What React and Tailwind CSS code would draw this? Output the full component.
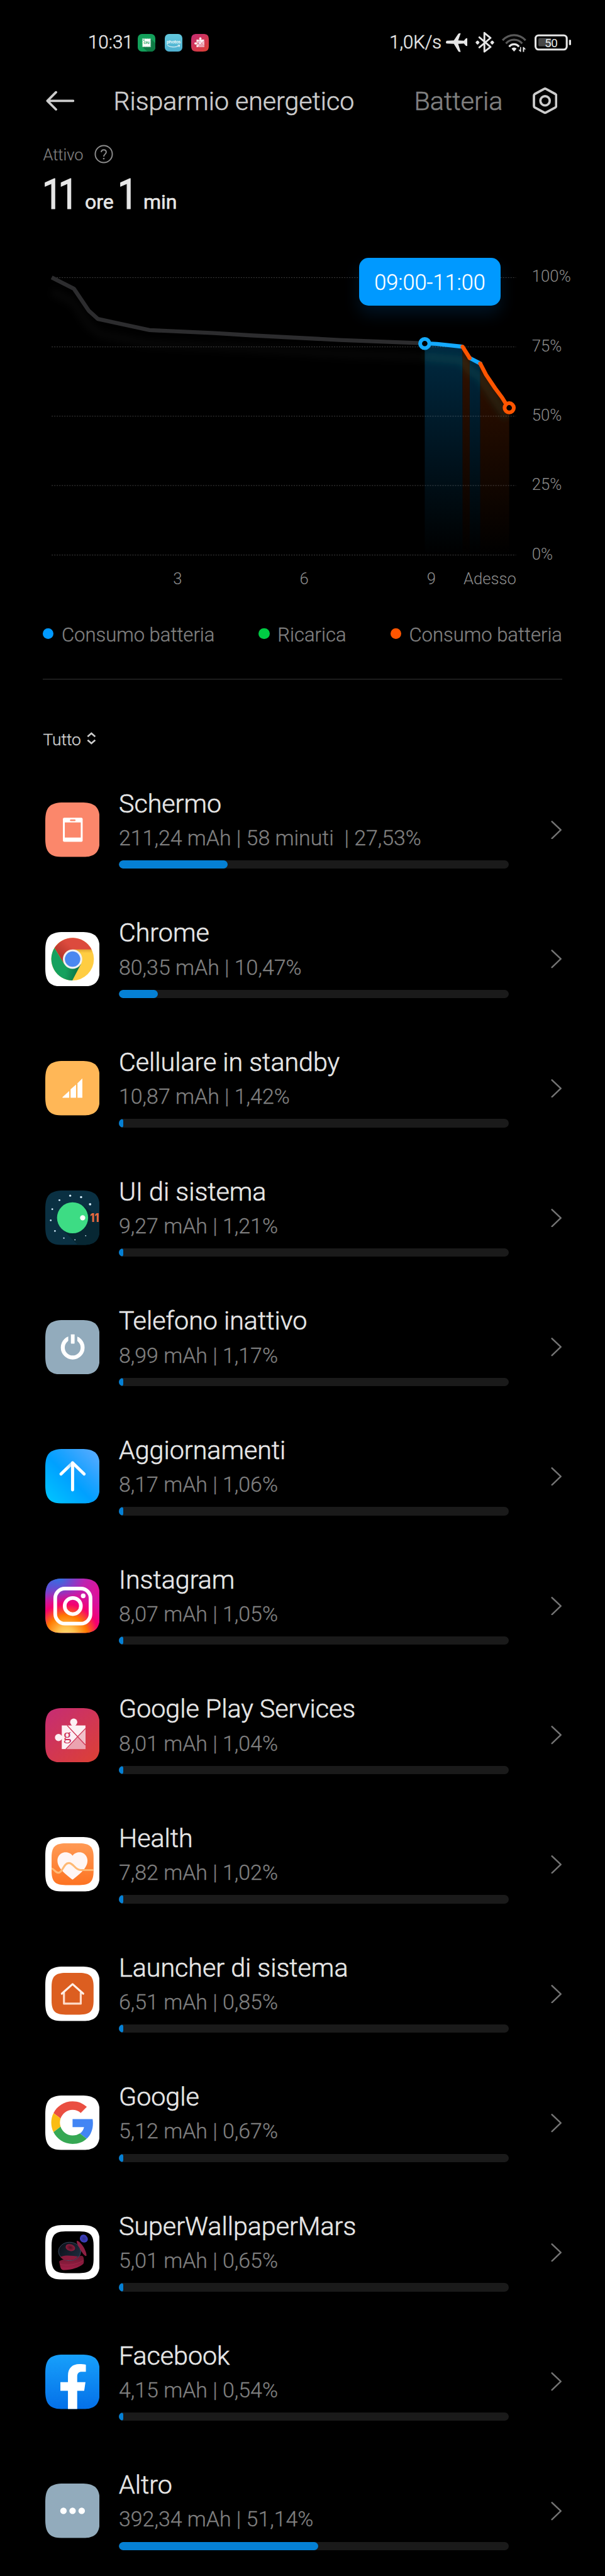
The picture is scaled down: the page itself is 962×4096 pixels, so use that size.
import React from "react";

const SQUIRCLE =
  "M0 44C0 11 11 0 44 0H86C119 0 130 11 130 44V86C130 119 119 130 86 130H44C11 130 0 119 0 86Z";
const INNER =
  "M15 48.500C15 23.500 23.500 15 48.500 15H81.500C106.500 15 115 23.500 115 48.500V81C115 106 106.500 114.500 81.500 114.500H48.500C23.500 114.500 15 106 15 81Z";

function Tile({ fill, children, id }) {
  return (
    <svg viewBox="0 0 130 130" className="block h-[86.8px] w-[86.8px] shrink-0">
      <defs>
        <clipPath id={`${id}-clip`}>
          <path d={SQUIRCLE} />
        </clipPath>
      </defs>
      <g clipPath={`url(#${id}-clip)`}>
        <rect width="130" height="130" fill={fill} />
        {children}
      </g>
    </svg>
  );
}

function ScreenIcon() {
  return (
    <Tile id="screen" fill="#fb876b">
      <rect x="42" y="36.200" width="47" height="57.300" rx="3" fill="#fff" />
      <rect x="46.500" y="47.500" width="38" height="36" fill="#fb876b" />
      <rect x="59" y="40.300" width="13" height="3.800" rx="1.900" fill="#fb876b" />
    </Tile>
  );
}

function ChromeIcon() {
  return (
    <Tile id="chrome" fill="#fff">
      <defs>
        <linearGradient id="chr-y" x1="0" y1="0" x2="0" y2="1">
          <stop offset="0" stopColor="#e2a62f" />
          <stop offset="1" stopColor="#ffcd42" />
        </linearGradient>
        <linearGradient id="chr-g" x1="0" y1="0.500" x2="1" y2="0.700">
          <stop offset="0.500" stopColor="#15a15e" />
          <stop offset="1" stopColor="#0b6b42" />
        </linearGradient>
        <linearGradient id="chr-r" x1="0.100" y1="0.700" x2="0.500" y2="0.400">
          <stop offset="0" stopColor="#b23529" />
          <stop offset="1" stopColor="#dc4a3d" />
        </linearGradient>
      </defs>
      <circle cx="65" cy="64.500" r="50.800" fill="#ffcd42" />
      <path d="M65 41.500H110L112 50L82 49Z" fill="url(#chr-y)" />
      <path d="M110.300 41.500A50.800 50.800 0 0 0 21.800 38L45 76L65 41.500Z" fill="url(#chr-r)" />
      <path d="M21.800 38A50.800 50.800 0 0 0 64.500 115.300L85 76L65 86L45 76Z" fill="url(#chr-g)" />
      <circle cx="65" cy="64.500" r="23" fill="#f1f1f1" />
      <circle cx="65" cy="64.500" r="18.400" fill="#4a88f0" />
    </Tile>
  );
}

function StandbyIcon() {
  return (
    <Tile id="standby" fill="#ffb757">
      <g fill="#fff">
        <path d="M41 87.700V86L57 71.500V87.700Z" />
        <path d="M60.300 87.700V67.500L73.300 56V87.700Z" />
        <path d="M76.700 87.700V53L88.300 41.500V87.700Z" />
      </g>
    </Tile>
  );
}

const STARS = [
  [59.3, 12.2, 2.5], [85.3, 15.8, 2.6], [106.7, 32.6, 2.8], [33.7, 23, 2.2], [16.7, 44.4, 2.1],
  [13, 71, 2], [23, 96.4, 1.9], [44.3, 113.3, 1.6], [70.7, 117.3, 1.4], [96.3, 107.6, 1.3],
];

function SystemUiIcon() {
  return (
    <Tile id="sysui" fill="#0a3042">
      <path d="M92 38L130 66V130H78L44 96Z" fill="#072733" />
      <circle cx="65" cy="65" r="37" fill="#3ddc84" />
      <circle cx="89" cy="65" r="6.200" fill="#fff" />
      {STARS.map(([x, y, r]) => (
        <circle key={x} cx={x} cy={y} r={r} fill="#d6efff" />
      ))}
      <text x="106.500" y="75" fontSize="27" fontWeight="800" fontFamily="Inter, sans-serif" fill="#e96b40" textLength="21.500" lengthAdjust="spacingAndGlyphs">
        11
      </text>
    </Tile>
  );
}

function PowerIcon() {
  return (
    <Tile id="power" fill="#92abbc">
      <circle cx="65.300" cy="65.500" r="23.600" fill="none" stroke="#fff" strokeWidth="9.400" />
      <rect x="54.700" y="32" width="21.600" height="24" fill="#92abbc" />
      <rect x="61" y="34" width="8.800" height="22.200" rx="1" fill="#fff" />
    </Tile>
  );
}

function UpdateIcon() {
  return (
    <Tile id="update" fill="url(#upd-bg)">
      <defs>
        <linearGradient id="upd-bg" x1="0.050" y1="0.950" x2="0.950" y2="0.050">
          <stop offset="0" stopColor="#00c3ff" />
          <stop offset="0.450" stopColor="#00a0ff" />
          <stop offset="0.650" stopColor="#1ea2ff" />
          <stop offset="1" stopColor="#57abff" />
        </linearGradient>
        <linearGradient id="upd-arm" x1="37" y1="60" x2="65" y2="33" gradientUnits="userSpaceOnUse">
          <stop offset="0.450" stopColor="#fff" />
          <stop offset="0.900" stopColor="#a9dcff" />
        </linearGradient>
      </defs>
      <g fill="none" strokeWidth="7.400" strokeLinecap="round" strokeLinejoin="round">
        <path d="M37.500 59.500L65 33" stroke="url(#upd-arm)" />
        <path d="M65 97.500V33L92.500 59.500" stroke="#fff" />
      </g>
    </Tile>
  );
}

function InstagramIcon() {
  return (
    <Tile id="insta" fill="url(#ig-a)">
      <defs>
        <linearGradient id="ig-a" x1="0" y1="0" x2="1" y2="0.700">
          <stop offset="0" stopColor="#4a5be0" />
          <stop offset="0.350" stopColor="#a52fbe" />
          <stop offset="0.700" stopColor="#d9169f" />
          <stop offset="1" stopColor="#e6008a" />
        </linearGradient>
        <radialGradient id="ig-b" cx="50" cy="138" r="125" gradientUnits="userSpaceOnUse">
          <stop offset="0" stopColor="#ffe07c" />
          <stop offset="0.180" stopColor="#ffc24e" />
          <stop offset="0.400" stopColor="#ff7a00" />
          <stop offset="0.620" stopColor="#f5006e" />
          <stop offset="0.800" stopColor="#dd0f96" stopOpacity="0.700" />
          <stop offset="1" stopColor="#b02cc0" stopOpacity="0" />
        </radialGradient>
        <radialGradient id="ig-c" cx="32" cy="-4" r="62" gradientUnits="userSpaceOnUse">
          <stop offset="0" stopColor="#2a78e4" />
          <stop offset="1" stopColor="#6a3fd0" stopOpacity="0" />
        </radialGradient>
      </defs>
      <rect width="130" height="130" fill="url(#ig-b)" />
      <rect width="130" height="130" fill="url(#ig-c)" />
      <g fill="none" stroke="#fff" strokeWidth="8.700">
        <rect x="23.700" y="23.800" width="84" height="83.600" rx="23" />
        <circle cx="65.500" cy="65.400" r="19.300" />
      </g>
      <circle cx="90.300" cy="41.300" r="5.600" fill="#fff" />
    </Tile>
  );
}

function PuzzleArt() {
  return (
    <>
      <g fill="#fcf0f4">
        <rect x="39.300" y="41.300" width="56.400" height="56.200" />
        <circle cx="67.700" cy="33.200" r="8.500" />
        <circle cx="31.500" cy="70" r="8.500" />
        <rect x="63.500" y="38" width="8.500" height="6" />
        <rect x="36" y="66" width="6" height="8" />
      </g>
      <path d="M76.500 68.500L95.700 88V97.500H49Z" fill="#eba3b0" />
      <path d="M76.500 68.500L95.700 48.500V88Z" fill="#f1c0ca" />
      <path d="M52 41.300L95.700 88M95.700 48.500L49 97.500" stroke="#cf3556" strokeWidth="2" />
      <text x="52.500" y="76.500" textAnchor="middle" fontSize="38" fontFamily="Liberation Serif, serif" fill="#cc3058">
        g
      </text>
    </>
  );
}

function PlayServicesIcon({ id = "gps" }) {
  return (
    <Tile id={id} fill={`url(#${id}-bg)`}>
      <defs>
        <linearGradient id={`${id}-bg`} x1="0.100" y1="0" x2="0.900" y2="1">
          <stop offset="0" stopColor="#c62d72" />
          <stop offset="1" stopColor="#dc4036" />
        </linearGradient>
      </defs>
      <PuzzleArt />
    </Tile>
  );
}

function HealthIcon() {
  return (
    <Tile id="health" fill="#fff">
      <defs>
        <linearGradient id="hl-bg" x1="0" y1="0" x2="0" y2="1">
          <stop offset="0" stopColor="#ff9a55" />
          <stop offset="1" stopColor="#fd7322" />
        </linearGradient>
      </defs>
      <path d={INNER} fill="url(#hl-bg)" />
      <path
        d="M65 44.500C59 36 49 35.500 43 37C34 39.500 29 47 29 56C29 74 48 88 65 101.500C82 88 100.500 74 100.500 56C100.500 47 95 39.500 87 37C80 35.500 71 36 65 44.500Z"
        fill="#fff6f5"
      />
      <path
        d="M15 75C22 76 23 85 31 85C42 85 43 62 56 62C68 62 70 78.500 84 78.500H115"
        fill="none"
        stroke="#ffb974"
        strokeWidth="4.600"
      />
    </Tile>
  );
}

function LauncherIcon() {
  return (
    <Tile id="launcher" fill="#fff">
      <path d={INNER} fill="#dc5e20" />
      <g fill="none" strokeWidth="4.800" strokeLinecap="round" strokeLinejoin="round">
        <path d="M44.500 62V88.300H84.500V62" stroke="#ffdcca" />
        <path d="M39.500 64.500L65 41.700L90.300 64.500" stroke="#fff0e8" />
      </g>
    </Tile>
  );
}

function GoogleIcon() {
  return (
    <Tile id="google" fill="#fff">
      <g transform="translate(14.200 13.800) scale(2.115)">
        <path fill="#ea4f41" d="M24 9.500c3.540 0 6.710 1.220 9.210 3.600l6.850-6.850C35.900 2.380 30.470 0 24 0 14.620 0 6.510 5.380 2.560 13.220l7.980 6.190C12.430 13.720 17.740 9.500 24 9.500z" />
        <path fill="#4285f4" d="M46.980 24.550c0-1.570-.15-3.090-.38-4.550H24v9.020h12.940c-.58 2.960-2.260 5.480-4.780 7.180l7.730 6c4.510-4.180 7.090-10.360 7.090-17.650z" />
        <path fill="#fbbc14" d="M10.530 28.590c-.48-1.450-.76-2.990-.76-4.590s.27-3.140.76-4.590l-7.980-6.190C.92 16.460 0 20.120 0 24c0 3.880.92 7.540 2.560 10.780l7.970-6.190z" />
        <path fill="#36a854" d="M24 48c6.480 0 11.930-2.130 15.890-5.810l-7.730-6c-2.150 1.450-4.920 2.300-8.160 2.300-6.260 0-11.570-4.220-13.470-9.910l-7.980 6.190C6.510 42.620 14.620 48 24 48z" />
      </g>
    </Tile>
  );
}

function MarsIcon() {
  return (
    <Tile id="mars" fill="#fff">
      <defs>
        <linearGradient id="ms-disc" x1="0" y1="0" x2="1" y2="0.600">
          <stop offset="0" stopColor="#0b0f17" />
          <stop offset="1" stopColor="#1d2a3b" />
        </linearGradient>
        <radialGradient id="ms-moon">
          <stop offset="0" stopColor="#2a2f88" />
          <stop offset="1" stopColor="#3f40c4" />
        </radialGradient>
        <radialGradient id="ms-spot">
          <stop offset="0" stopColor="#4a0f22" />
          <stop offset="1" stopColor="#8f1f3f" />
        </radialGradient>
        <linearGradient id="ms-slab" x1="0" y1="0" x2="0" y2="1">
          <stop offset="0" stopColor="#6b1730" />
          <stop offset="1" stopColor="#a31f48" />
        </linearGradient>
      </defs>
      <path d={INNER} fill="#000" />
      <path d="M33 87C40 80 52 82 66 79C78 76 88 68 91 77C92 82 93 90 90 93C80 102 58 108 43 107C35 106 36 98 33 87Z" fill="url(#ms-slab)" />
      <path d="M35 93C52 98 76 94 91 84" fill="none" stroke="#c23a5e" strokeWidth="1" opacity="0.600" />
      <ellipse cx="58" cy="62.800" rx="26.600" ry="22" fill="url(#ms-disc)" stroke="#46566e" strokeWidth="1.200" />
      <path d="M36 76C48 70 68 74 78 75C72 83 63 84.500 56 84C47 84 40 81 36 76Z" fill="#8a1b3c" />
      <ellipse cx="59.700" cy="53.600" rx="11.500" ry="8" transform="rotate(18 59.700 53.600)" fill="url(#ms-spot)" />
      <path d="M75 37.500C80 37 87 46 91 52C95 59 99 68 98 73.500C94 75 88 66 84 59C80 52 74 43 75 37.500Z" fill="#8e1f42" />
      <path d="M83 29C85 22 92 21.500 97 25C102 30 103 36 98 40C93 43 87 41 84 37C82 34 82 32 83 29Z" fill="url(#ms-moon)" />
    </Tile>
  );
}

function FacebookIcon() {
  return (
    <Tile id="fb" fill="url(#fb-bg)">
      <defs>
        <linearGradient id="fb-bg" x1="0" y1="0" x2="0" y2="1">
          <stop offset="0" stopColor="#17a0fb" />
          <stop offset="1" stopColor="#0470e8" />
        </linearGradient>
      </defs>
      <path
        d="M54 130V86.200H36V65.400H54V50C54 32 65 22.600 81 22.600C87 22.600 93 23 96.700 24V41H87C79.500 41 76 45 76 52V65.400H95.700L92.700 86.200H76V130Z"
        fill="#fff"
      />
    </Tile>
  );
}

function OtherIcon() {
  return (
    <Tile id="other" fill="#92abbc">
      <g fill="#fff">
        <circle cx="43.300" cy="65" r="7.700" />
        <circle cx="65" cy="65" r="7.700" />
        <circle cx="86.700" cy="65" r="7.700" />
      </g>
    </Tile>
  );
}

const APPS = [
  { name: "Schermo", detail: "211,24 mAh | 58 minuti\u00a0 | 27,53%", pct: 27.9, Icon: ScreenIcon },
  { name: "Chrome", detail: "80,35 mAh | 10,47%", pct: 10.05, Icon: ChromeIcon },
  { name: "Cellulare in standby", detail: "10,87 mAh | 1,42%", pct: 1.1, Icon: StandbyIcon },
  { name: "UI di sistema", detail: "9,27 mAh | 1,21%", pct: 1.1, Icon: SystemUiIcon },
  { name: "Telefono inattivo", detail: "8,99 mAh | 1,17%", pct: 1.1, Icon: PowerIcon },
  { name: "Aggiornamenti", detail: "8,17 mAh | 1,06%", pct: 1.1, Icon: UpdateIcon },
  { name: "Instagram", detail: "8,07 mAh | 1,05%", pct: 1.1, Icon: InstagramIcon },
  { name: "Google Play Services", detail: "8,01 mAh | 1,04%", pct: 1.1, Icon: PlayServicesIcon },
  { name: "Health", detail: "7,82 mAh | 1,02%", pct: 1.1, Icon: HealthIcon },
  { name: "Launcher di sistema", detail: "6,51 mAh | 0,85%", pct: 1.1, Icon: LauncherIcon },
  { name: "Google", detail: "5,12 mAh | 0,67%", pct: 1.1, Icon: GoogleIcon },
  { name: "SuperWallpaperMars", detail: "5,01 mAh | 0,65%", pct: 1.1, Icon: MarsIcon },
  { name: "Facebook", detail: "4,15 mAh | 0,54%", pct: 1.1, Icon: FacebookIcon },
  { name: "Altro", detail: "392,34 mAh | 51,14%", pct: 51.1, Icon: OtherIcon },
];

function StatusBar() {
  return (
    <div className="flex h-[136px] shrink-0 items-center pr-[54px] pl-[140px]">
      <span className="w-[79px] text-[29.500px] leading-none font-light text-[#e6e6e6] [-webkit-text-stroke:0.5px]">10:31</span>
      <div className="flex gap-[14.7px]">
        <svg viewBox="0 0 126 126" className="h-7 w-7">
          <defs>
            <clipPath id="cpu-clip">
              <rect width="126" height="126" rx="30" />
            </clipPath>
          </defs>
          <g clipPath="url(#cpu-clip)">
            <rect width="126" height="126" fill="#139f5a" />
            <path d="M93 33L126 66V126H70L33 93Z" fill="#0e7a45" />
            <rect x="35" y="35" width="56" height="56" fill="#fff" />
            <rect x="33" y="33" width="60" height="60" fill="none" stroke="#fff" strokeWidth="3" strokeDasharray="4 3" />
            <rect x="40" y="40" width="8" height="8" fill="#139f5a" />
            <text x="63" y="70" textAnchor="middle" fontSize="19" fontWeight="800" fontFamily="Inter, sans-serif" fill="#139f5a">
              CPU
            </text>
          </g>
        </svg>
        <svg viewBox="0 0 126 126" className="h-7 w-7">
          <defs>
            <linearGradient id="ph-bg" x1="0" y1="0" x2="0" y2="1">
              <stop offset="0" stopColor="#62c7dc" />
              <stop offset="1" stopColor="#4fb0d0" />
            </linearGradient>
          </defs>
          <rect width="126" height="126" rx="30" fill="url(#ph-bg)" />
          <text x="63" y="67" textAnchor="middle" fontSize="32" textLength="102" fontFamily="Open Sans, sans-serif" fontWeight="600" fill="#fff">
            photos
          </text>
          <path d="M19 81C42 97 76 98 102 84M92 81L107 80L102 94" fill="none" stroke="#fff" strokeWidth="4.500" />
        </svg>
        <div className="h-7 w-7 [&>svg]:h-7 [&>svg]:w-7">
          <PlayServicesIcon id="gps-mini" />
        </div>
      </div>
      <div className="ml-auto flex items-center">
        <span className="mr-[6.500px] text-[29.200px] leading-none font-light text-[#e6e6e6] [-webkit-text-stroke:0.5px]">1,0K/s</span>
        <svg viewBox="483 40 153 158" className="mr-[13.4px] h-[35.200px] w-[34px]" fill="#e6e6e6">
          <path d="M490 106Q483 109 483 117Q483 126 490 127L540 129L572 182Q574 186 580 186H589L571 129L612 127L624 141Q628 144 636 144V88Q628 87 624 92L612 106L571 104L589 53H580Q574 53 570 59L540 104Z" />
        </svg>
        <svg viewBox="696 40 135 158" className="mr-[12px] h-[35.200px] w-[30px]" fill="none" stroke="#e6e6e6" strokeWidth="13" strokeLinejoin="round" strokeLinecap="round">
          <path d="M724 82L804 151L760 184V50L804 86L724 154" />
          <path d="M711 112L704 119L711 126L718 119ZM816 112L809 119L816 126L823 119Z" fill="#e6e6e6" />
        </svg>
        <svg viewBox="884 40 175 158" className="mr-[12.7px] h-[35.200px] w-[39px]" fill="none" strokeWidth="15" strokeLinecap="butt">
          <path d="M889 103C935 54 1007 54 1053 103" stroke="#595959" />
          <path d="M913 126C944 90 998 90 1029 126" stroke="#595959" />
          <path d="M936 149C955 126 987 126 1006 149" stroke="#e6e6e6" />
          <path d="M953 164C962 152 980 152 989 164L971 184Z" fill="#e6e6e6" />
          <path d="M1021 151V186H1015L1003 170H1014V151ZM1034 186V151H1040L1056 168H1043V186Z" fill="#e6e6e6" />
        </svg>
        <svg viewBox="1116 40 262 158" className="h-[35.200px] w-[58.300px]">
          <rect x="1123" y="68" width="223" height="101" rx="22" fill="none" stroke="#e6e6e6" strokeWidth="14" />
          <rect x="1143" y="87" width="93" height="60" rx="10" fill="#474747" />
          <rect x="1362" y="99" width="15" height="39" rx="6" fill="#e6e6e6" />
          <text x="1234" y="152" textAnchor="middle" fontSize="85" fill="#e6e6e6" letterSpacing="-2">
            50
          </text>
        </svg>
      </div>
    </div>
  );
}

function Header() {
  return (
    <div className="flex h-[49px] shrink-0 items-center pl-[73px]">
      <svg viewBox="109 214 68 52" className="h-[34.700px] w-[45.400px]" fill="none" stroke="#cccccc" strokeWidth="5.600" strokeLinecap="round" strokeLinejoin="round">
        <path d="M174 240H112.500M133 219.500L112.500 240L133 260.500" />
      </svg>
      <h1 className="mt-[3px] ml-[62px] w-[478px] text-[41.100px] leading-none font-light whitespace-nowrap text-[#cccccc] [-webkit-text-stroke:0.600px]">Risparmio energetico</h1>
      <span className="mt-[3px] w-[186.600px] text-[41.400px] leading-none font-light text-[#808080] [-webkit-text-stroke:0.600px]">Batteria</span>
      <svg viewBox="1104 440 177 190" className="ml-[2px] h-[42.300px] w-[39.400px]" fill="none" stroke="#cccccc" strokeWidth="17" strokeLinejoin="round">
        <path d="M1186 451Q1192.500 447 1199 451L1266 487Q1272 491 1272 498V572Q1272 579 1266 583L1199 619Q1192.500 623 1186 619L1119 583Q1113 579 1113 572V498Q1113 491 1119 487Z" />
        <circle cx="1192.500" cy="535.500" r="33.500" />
      </svg>
    </div>
  );
}

const GRID = [
  ["100%", 660.5],
  ["75%", 825.5],
  ["50%", 990.5],
  ["25%", 1155.5],
  ["0%", 1321],
];

function Chart() {
  return (
    <div className="relative mt-[56.500px] h-[534.300px] shrink-0">
      <svg viewBox="0 600 1440 800" preserveAspectRatio="none" className="block h-full w-full">
        <defs>
          <linearGradient id="area-blue" x1="0" y1="817" x2="0" y2="1321" gradientUnits="userSpaceOnUse">
            <stop offset="0" stopColor="#002a42" />
            <stop offset="1" stopColor="#002a42" stopOpacity="0" />
          </linearGradient>
          <linearGradient id="area-orange" x1="0" y1="825" x2="0" y2="1321" gradientUnits="userSpaceOnUse">
            <stop offset="0" stopColor="#341200" />
            <stop offset="1" stopColor="#341200" stopOpacity="0" />
          </linearGradient>
          <filter id="soft" x="-10%" y="-30%" width="120%" height="160%">
            <feGaussianBlur stdDeviation="8" />
          </filter>
        </defs>
        <path d="M1011 817L1101 825V1321H1011Z" fill="url(#area-blue)" />
        <path d="M1101 825L1118 852V1321H1101Z" fill="url(#area-orange)" />
        <path d="M1118 852L1143 865V1321H1118Z" fill="url(#area-blue)" />
        <path d="M1143 865L1212 970V1321H1143Z" fill="url(#area-orange)" />
        <path
          d="M123 692L176 720L211 773L240 795L356 818L510 825L808 842L1011 849"
          fill="none"
          stroke="#ffffff"
          strokeOpacity="0.025"
          strokeWidth="22"
          filter="url(#soft)"
        />
        <path
          d="M1011 849L1099 857L1120 883L1143 897L1178 950L1206 992"
          fill="none"
          stroke="#30a878"
          strokeOpacity="0.130"
          strokeWidth="20"
          filter="url(#soft)"
        />
        {GRID.map(([label, y]) => (
          <g key={label}>
            <line x1="123" x2="1228" y1={y} y2={y} stroke="#ffffff" strokeOpacity="0.320" strokeWidth="1.200" strokeDasharray="3 3" />
            <text x="1266" y={y + 10.5} fontSize="38.600" fill="#8c8c8c" fontWeight="300">
              {label}
            </text>
          </g>
        ))}
        <g fontSize="38.400" fill="#8c8c8c" fontWeight="300" textAnchor="middle">
          <text x="422.500" y="1391">3</text>
          <text x="724" y="1391">6</text>
          <text x="1026.500" y="1391">9</text>
          <text x="1166" y="1391">Adesso</text>
        </g>
        <g fill="none" strokeWidth="9.500" strokeLinejoin="round">
          <path d="M123 660L176 687L211 739L233 759L356 785.500L510 792.500L597 798L808 809L1011 817" stroke="#2c2c2e" />
          <path d="M1011 817L1040 818.500L1101 825" stroke="#14aaff" />
          <path d="M1118 852L1143 865" stroke="#14aaff" strokeLinecap="round" />
          <path d="M1101 825L1118 852" stroke="#ff5500" strokeLinecap="round" />
          <path d="M1143 865L1157 892L1178.500 924L1195 946L1208 967" stroke="#ff5500" strokeLinecap="round" />
          <circle cx="1011" cy="817.500" r="11" fill="#000" stroke="#14aaff" strokeWidth="9" />
          <circle cx="1212" cy="970.500" r="11" fill="#000" stroke="#ff5500" strokeWidth="9" />
        </g>
      </svg>
      <div className="absolute top-[9.500px] left-[571px] flex h-[76px] w-[225px] items-center justify-center rounded-[15px] bg-[#0099ff] pt-[3px] text-[34.300px] leading-none font-light text-white shadow-[0_14px_26px_rgba(0,120,220,0.16)] [-webkit-text-stroke:0.3px]">
        09:00-11:00
      </div>
    </div>
  );
}

function Legend() {
  const items = [
    ["Consumo batteria", "bg-[#0099ff]"],
    ["Ricarica", "bg-[#00cc44]"],
    ["Consumo batteria", "bg-[#ff5500]"],
  ];
  return (
    <div className="mx-[68px] mt-[58px] flex h-[30px] shrink-0 items-center justify-between">
      {items.map(([label, dot], i) => (
        <div key={i} className="flex items-center gap-[12.500px]">
          <span className={`h-[17.400px] w-[17.400px] rounded-full ${dot}`} />
          <span className="mt-[3px] text-[31px] leading-none font-light whitespace-nowrap text-[#808080] [-webkit-text-stroke:0.3px]">{label}</span>
        </div>
      ))}
    </div>
  );
}

function AppRow({ name, detail, pct, Icon }) {
  return (
    <li className="flex h-[205.670px] shrink-0 items-center pr-[68.500px] pl-[71.500px]">
      <Icon />
      <div className="mb-[3.600px] ml-[30.700px] w-[620px]">
        <div className="text-[41.200px] leading-[48px] font-light whitespace-nowrap text-[#e6e6e6] [-webkit-text-stroke:0.600px]">{name}</div>
        <div className="mt-[11.300px] text-[33.900px] leading-[40px] font-light whitespace-nowrap text-[#808080] [-webkit-text-stroke:0.3px]">{detail}</div>
        <div className="mt-[15.100px] h-[13.400px] overflow-hidden rounded-full bg-[#1a1a1a]">
          <div className="h-full rounded-full bg-[#0580d4]" style={{ width: `${pct}%` }} />
        </div>
      </div>
      <svg viewBox="0 0 26 44" className="ml-auto h-[29.400px] w-[17.400px]" fill="none" stroke="#737373" strokeWidth="3.800" strokeLinecap="round" strokeLinejoin="round">
        <path d="M2.500 2L23.500 22L2.500 42" />
      </svg>
    </li>
  );
}

export default function App() {
  return (
    <div className="flex h-[4096px] w-[962px] flex-col overflow-hidden bg-black font-[Roboto,sans-serif]">
      <StatusBar />
      <Header />
      <div className="mt-[47px] flex h-[26px] shrink-0 items-center pl-[68.500px]">
        <span className="mt-[3px] w-[81.500px] text-[25.400px] leading-none font-light text-[#808080] [-webkit-text-stroke:0.2px]">Attivo</span>
        <svg viewBox="0 0 46 46" className="h-[30px] w-[30px]">
          <circle cx="23" cy="23" r="20.800" fill="none" stroke="#8c8c8c" strokeWidth="3" />
          <path d="M17 18.500C17 10.500 29 10.500 29 18.500C29 23 23 23.500 23 29" fill="none" stroke="#8c8c8c" strokeWidth="3" />
          <circle cx="23" cy="34" r="1.900" fill="#8c8c8c" />
        </svg>
      </div>
      <div className="mt-[16px] flex h-[70px] shrink-0 items-baseline pl-[66.800px] leading-[70px] text-[#e6e6e6]">
        <span className="w-[68.100px] origin-left scale-x-[0.840] text-[67.500px] tracking-[-7.500px] [-webkit-text-stroke:1.200px]">11</span>
        <span className="w-[52.400px] text-[32px] [-webkit-text-stroke:0.600px]">ore</span>
        <span className="w-[40.700px] origin-left scale-x-[0.840] text-[67.500px] [-webkit-text-stroke:1.200px]">1</span>
        <span className="text-[32px] [-webkit-text-stroke:0.600px]">min</span>
      </div>
      <Chart />
      <Legend />
      <div className="mx-[68px] mt-[56px] h-[2px] shrink-0 bg-[#1c1c1c]" />
      <div className="mt-[78px] flex h-[30px] shrink-0 items-center gap-[9px] pl-[68.500px]">
        <span className="mt-[4px] text-[26.300px] leading-none font-light text-[#cccccc] [-webkit-text-stroke:0.4px]">Tutto</span>
        <svg viewBox="0 0 22 30" className="h-[20px] w-[14.700px]" fill="none" stroke="#cccccc" strokeWidth="4" strokeLinejoin="miter">
          <path d="M2 11L11 3L20 11M2 19L11 27L20 19" />
        </svg>
      </div>
      <ul className="mt-[27.700px]">
        {APPS.map((app) => (
          <AppRow key={app.name} {...app} />
        ))}
      </ul>
    </div>
  );
}
